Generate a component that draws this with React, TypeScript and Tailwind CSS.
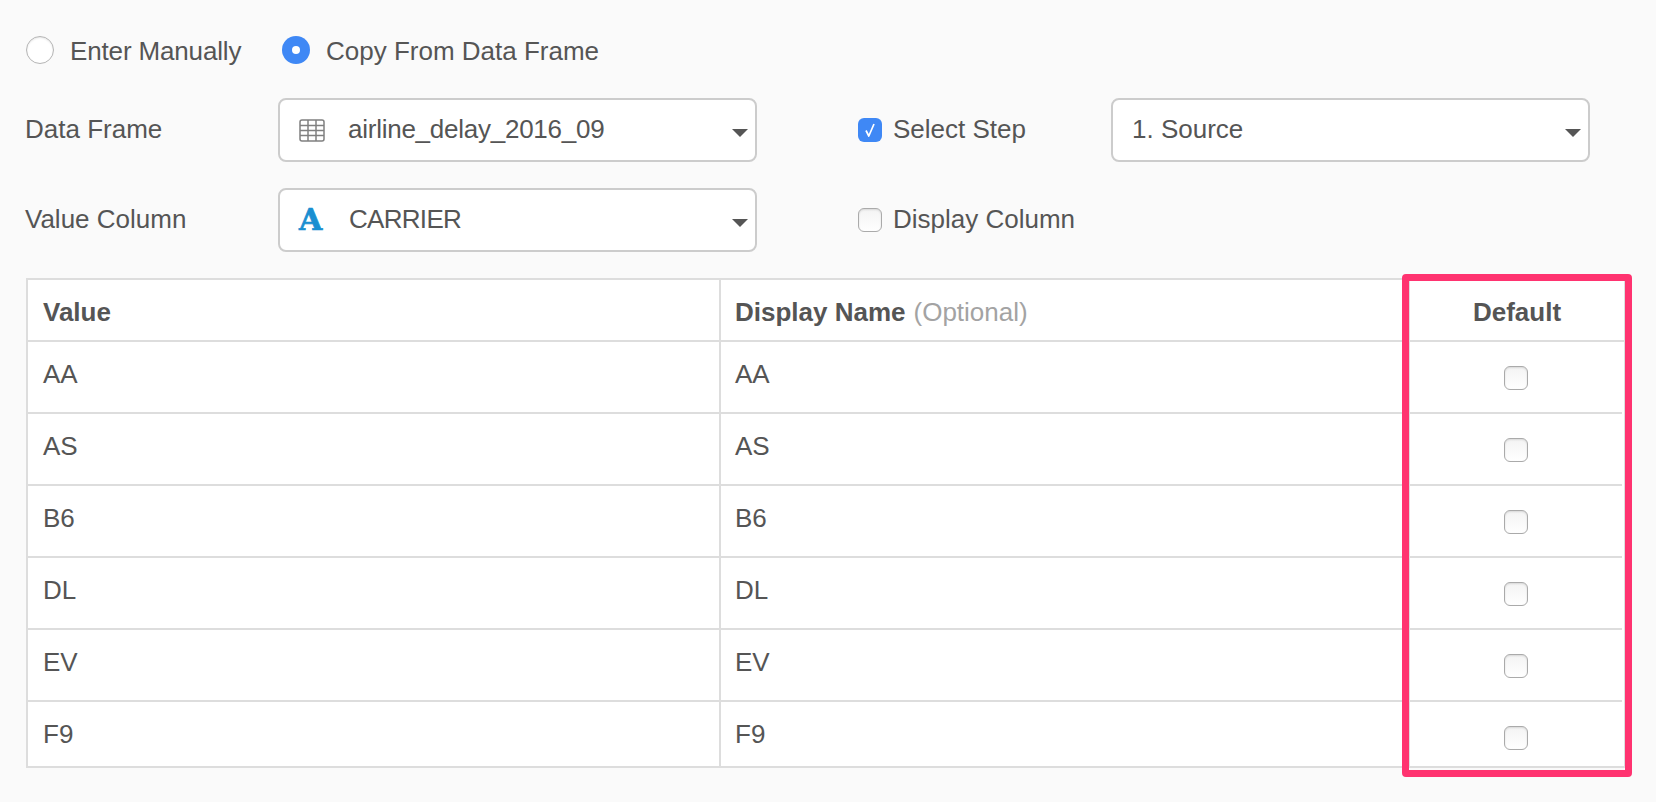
const rows = ["AA", "AS", "B6", "DL", "EV", "F9"];

function Caret() {
  return <div className="ml-auto mt-[5px] w-0 h-0 border-x-[8px] border-x-transparent border-t-[8px] border-t-[#555]" />;
}

function Box() {
  return (
    <span className="block w-6 h-6 rounded-[6px] border border-[#aaa] bg-gradient-to-b from-[#f4f4f4] to-white shadow-[inset_0_1px_2px_rgba(0,0,0,0.12)]" />
  );
}

function Checked() {
  return (
    <span className="flex items-center justify-center w-6 h-6 rounded-[6px] bg-[#3f88f5]">
      <svg width="16" height="18" viewBox="0 0 16 18" fill="none">
        <path d="M4 9.5 L6.8 15 L12 3" stroke="#fff" strokeWidth="1.7" strokeLinejoin="round" />
      </svg>
    </span>
  );
}

function Select({ icon, text, textClass }: { icon?: React.ReactNode; text: string; textClass: string }) {
  return (
    <div className="flex items-center w-[479px] h-[64px] bg-white border-2 border-[#ccc] rounded-[8px] pr-[7px] text-[#555]">
      {icon}
      <span className={`pb-[2px] ${textClass}`}>{text}</span>
      <Caret />
    </div>
  );
}

function GridIcon() {
  return (
    <svg className="ml-[19px] shrink-0" width="26" height="23" viewBox="0 0 26 23" fill="none" stroke="#808080" strokeWidth="1.5">
      <rect x="1" y="1" width="24" height="21" rx="2" />
      <path d="M1 6.5H25M1 11.5H25M1 16.5H25M9 1V22M17 1V22" />
    </svg>
  );
}

function LetterIcon() {
  return (
    <span className="ml-[19px] w-[24px] shrink-0 text-[30px] leading-none font-bold text-[#1a8fd1] font-['DejaVu_Serif',serif] [-webkit-text-stroke:0.7px_#1a8fd1]">
      A
    </span>
  );
}

export default function App() {
  return (
    <div className="relative w-[1656px] h-[802px] overflow-hidden bg-[#fafafa] text-[26px] leading-none text-[#555] font-['Liberation_Sans',Arial,sans-serif]">
      <div className="pt-[36px] pl-[26px]">
        <div className="flex items-center h-[28px]">
          <span className="w-7 h-7 rounded-full border border-[#b5b5b5] bg-white shadow-[inset_0_1px_2px_rgba(0,0,0,0.1)]" />
          <span className="ml-[16px] w-[212px] pt-[2px] whitespace-nowrap tracking-[-0.15px]">Enter Manually</span>
          <span className="flex items-center justify-center w-7 h-7 rounded-full bg-[#3f88f5]">
            <span className="w-2 h-2 rounded-full bg-white" />
          </span>
          <span className="ml-[16px] pt-[2px] whitespace-nowrap">Copy From Data Frame</span>
        </div>

        <div className="flex items-center mt-[34px] h-[64px]">
          <span className="w-[252px] -ml-px mr-px pb-[2px]">Data Frame</span>
          <Select icon={<GridIcon />} text="airline_delay_2016_09" textClass="ml-[23px] tracking-[-0.25px]" />
          <span className="ml-[101px] flex items-center gap-[11px] w-[253px]">
            <Checked />
            <span className="pb-[2px]">Select Step</span>
          </span>
          <Select text="1. Source" textClass="ml-[19px]" />
        </div>

        <div className="flex items-center mt-[26px] h-[64px]">
          <span className="w-[252px] -ml-px mr-px pb-[2px]">Value Column</span>
          <Select icon={<LetterIcon />} text="CARRIER" textClass="ml-[26px] tracking-[-0.7px]" />
          <span className="ml-[101px] flex items-center gap-[11px]">
            <Box />
            <span className="pb-[2px]">Display Column</span>
          </span>
        </div>

        <div className="mt-[26px] w-[1600px] h-[490px] bg-white border-2 border-[#ddd] flex flex-col">
          <div className="flex h-[62px] shrink-0 font-bold border-b-2 border-[#ddd]">
            <div className="w-[693px] flex items-center pl-[15px] pt-[4px] border-r-2 border-[#ddd]">Value</div>
            <div className="w-[687px] flex items-center pl-[14px] pt-[4px]">
              Display Name
              <span className="ml-[8px] font-normal text-[#a3a3a3]">(Optional)</span>
            </div>
            <div className="flex-1 flex items-center justify-center pt-[4px] border-l-2 border-[#ddd]">Default</div>
          </div>
          {rows.map((r, i) => (
            <div key={r} className={`flex shrink-0 ${i === 5 ? "h-[64px]" : "h-[72px] mr-[2px] border-b-2 border-[#ddd]"}`}>
              <div className="w-[693px] pl-[15px] pt-[19px] border-r-2 border-[#ddd]">{r}</div>
              <div className="w-[687px] pl-[14px] pt-[19px]">{r}</div>
              <div className="flex-1 pt-[24px] pl-[94px] border-l-2 border-[#ddd]">
                <Box />
              </div>
            </div>
          ))}
        </div>
      </div>

      <div className="absolute left-[1402px] top-[274px] w-[230px] h-[503px] border-[7px] border-[#ff3370] rounded-[4px]" />
    </div>
  );
}
